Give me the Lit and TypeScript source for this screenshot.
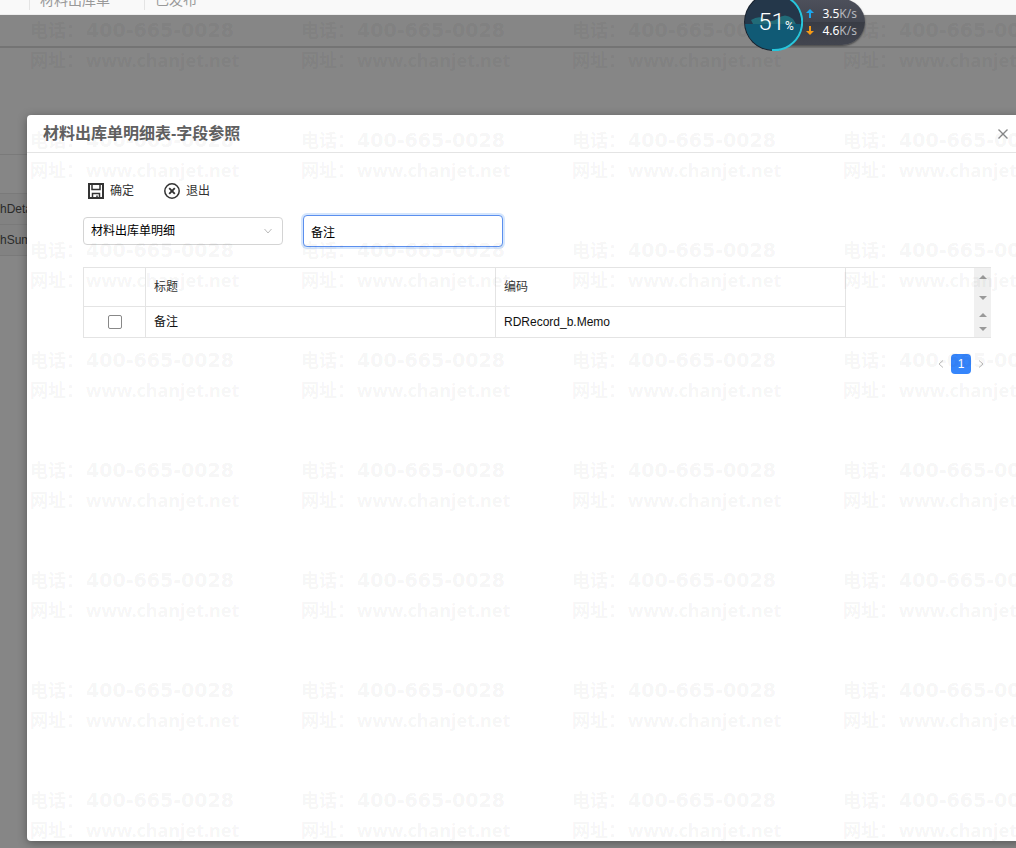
import { LitElement, html, css, svg } from "lit";
import { customElement, state } from "lit/decorators.js";

const caret = (up: boolean) => html`<svg class="caret" viewBox="0 0 8 4" aria-hidden="true">
  ${up ? svg`<path d="M0 4 4 0 8 4Z" />` : svg`<path d="M0 0H8L4 4Z" />`}
</svg>`;

@customElement("speed-ball")
class SpeedBall extends LitElement {
  static styles = css`
    :host {
      position: absolute;
      top: -8px;
      right: 151px;
      z-index: 4;
      display: flex;
      align-items: center;
      height: 60px;
      color: #fff;
      font-family: "Noto Sans", "Noto Sans CJK SC", sans-serif;
    }
    .ball {
      position: relative;
      z-index: 1;
      display: grid;
      place-items: center;
      width: 60px;
      height: 60px;
    }
    .ball svg {
      grid-area: 1 / 1;
      width: 60px;
      height: 60px;
    }
    .load {
      grid-area: 1 / 1;
      z-index: 1;
      display: flex;
      align-items: baseline;
      padding: 4px 0 0 6px;
      font-family: Roboto, sans-serif;
      font-weight: 300;
      font-size: 24px;
      line-height: 28px;
    }
    .load small {
      font-size: 12px;
      font-weight: 400;
    }
    .rates {
      box-sizing: border-box;
      width: 92px;
      height: 46px;
      margin-left: -30px;
      padding: 6px 8px 6px 33px;
      border-radius: 0 23px 23px 0;
      background: linear-gradient(#4d505b, #42454f 50%, #393c45 51%, #42454f);
      box-shadow: 0 1px 2px rgba(0, 0, 0, 0.5);
      font-size: 12px;
      line-height: 17px;
    }
    .rate {
      display: grid;
      grid-template-columns: 9px 1fr;
      align-items: center;
      height: 17px;
      white-space: nowrap;
      text-align: right;
    }
    .rate svg {
      width: 8px;
      height: 9px;
    }
    .unit {
      color: #b4b6bc;
    }
  `;

  render() {
    return html`
      <div class="ball">
        <svg viewBox="0 0 60 60" aria-hidden="true">
          <defs>
            <clipPath id="disc"><circle cx="30" cy="30" r="28" /></clipPath>
          </defs>
          <circle cx="30" cy="30" r="29" fill="#17212d" />
          <g clip-path="url(#disc)">
            <rect width="60" height="60" fill="#24374a" />
            <path d="M8 28Q16 23 22 27Q28 31 34 27Q42 20 50 27L53 32H10Z" fill="#216b78" />
            <rect y="32" width="60" height="28" fill="#105a75" />
          </g>
          <path d="M47 7A28 28 0 0 1 29 58" fill="none" stroke="#27c6dc" stroke-width="2" />
        </svg>
        <span class="load">51<small>%</small></span>
      </div>
      <div class="rates">
        <div class="rate">
          <svg viewBox="0 0 8 9" aria-hidden="true"><path d="M4 0 8 4H5V9H3V4H0Z" fill="#1ba7ee" /></svg>
          <span>3.5<span class="unit">K/s</span></span>
        </div>
        <div class="rate">
          <svg viewBox="0 0 8 9" aria-hidden="true"><path d="M4 9 8 5H5V0H3V5H0Z" fill="#f59a17" /></svg>
          <span>4.6<span class="unit">K/s</span></span>
        </div>
      </div>
    `;
  }
}

@customElement("contact-watermark")
class ContactWatermark extends LitElement {
  @state() private columns = 1;
  @state() private lines = 1;

  static styles = css`
    :host {
      position: absolute;
      inset: 0;
      z-index: 3;
      overflow: hidden;
      pointer-events: none;
      color: rgba(0, 0, 0, 0.05);
      font-family: "Noto Sans", "Noto Sans CJK SC", sans-serif;
      font-weight: 700;
      font-size: 18px;
      line-height: 30px;
    }
    .row {
      display: flex;
      height: 110px;
    }
    .tiles {
      padding: 15px 0 0 30px;
    }
    .tile {
      flex: none;
      width: 271px;
    }
    .line {
      display: grid;
      grid-template-columns: 56px 1fr;
      height: 30px;
      white-space: nowrap;
    }
    .phone {
      font-family: "DejaVu Sans", sans-serif;
      font-size: 19px;
    }
  `;

  private fill = () => {
    this.columns = Math.ceil((window.innerWidth - 30) / 271);
    this.lines = Math.ceil((window.innerHeight - 15) / 110);
  };

  connectedCallback() {
    super.connectedCallback();
    this.fill();
    window.addEventListener("resize", this.fill);
  }

  disconnectedCallback() {
    window.removeEventListener("resize", this.fill);
    super.disconnectedCallback();
  }

  render() {
    const tile = () => html`<div class="tile">
      <div class="line"><span>电话：</span><span class="phone">400-665-0028</span></div>
      <div class="line"><span>网址：</span><span>www.chanjet.net</span></div>
    </div>`;
    return html`<div class="tiles" aria-hidden="true">
      ${Array.from(
        { length: this.lines },
        () => html`<div class="row">${Array.from({ length: this.columns }, tile)}</div>`
      )}
    </div>`;
  }
}

@customElement("app-root")
class AppRoot extends LitElement {
  @state() private keyword = "备注";
  @state() private rows = [{ title: "备注", code: "RDRecord_b.Memo" }];

  static styles = css`
    :host {
      position: relative;
      display: flex;
      flex-direction: column;
      height: 100vh;
      overflow: hidden;
      background: #868686;
      color: #333;
      font-family: "Liberation Sans", "Noto Sans CJK SC", sans-serif;
      font-size: 12px;
      line-height: 18px;
    }
    button,
    input,
    select {
      margin: 0;
      font: inherit;
      color: inherit;
    }
    button {
      padding: 0;
      border: 0;
      background: none;
      cursor: pointer;
    }
    .topbar {
      display: flex;
      align-items: flex-end;
      flex: none;
      box-sizing: border-box;
      height: 15px;
      padding-left: 29px;
      overflow: hidden;
      background: #f9f9f9;
      border-bottom: 1px solid #ededed;
      color: #999;
      font-size: 14px;
      line-height: 20px;
    }
    .topbar span {
      box-sizing: border-box;
      height: 20px;
      margin-bottom: 4px;
      padding: 0 10px;
      border-left: 1px solid #e4e4e4;
    }
    .topbar .doc {
      width: 115px;
    }
    .under {
      flex: 1;
      color: #2a2a2a;
    }
    .rule {
      height: 31px;
      border-bottom: 2px solid #747474;
    }
    .gap {
      height: 106px;
      border-bottom: 1px solid #7a7a7a;
    }
    .head {
      height: 38px;
      border-bottom: 1px solid #7a7a7a;
    }
    .item {
      height: 30px;
      border-bottom: 1px solid #7a7a7a;
      background: #828282;
      line-height: 30px;
    }
    .dialog {
      position: absolute;
      inset: 115px -8px 7px 27px;
      z-index: 2;
      background: #fff;
      border-radius: 4px;
      box-shadow: 0 2px 10px rgba(0, 0, 0, 0.35);
    }
    .dialog-head {
      display: flex;
      align-items: center;
      justify-content: space-between;
      height: 37px;
      padding: 0 15px 0 16px;
      border-bottom: 1px solid #e4e4e4;
    }
    h2 {
      margin: 0;
      color: #606060;
      font-size: 16px;
      line-height: 24px;
    }
    .close {
      display: grid;
      width: 12px;
      height: 12px;
    }
    .close svg {
      width: 12px;
      height: 12px;
    }
    .body {
      padding: 28px 33px 0 56px;
    }
    .tools {
      display: flex;
      gap: 30px;
      padding-left: 5px;
    }
    .tool {
      display: flex;
      align-items: center;
      gap: 6px;
      height: 20px;
    }
    .tool svg {
      width: 16px;
      height: 16px;
    }
    .filters {
      display: flex;
      align-items: center;
      gap: 20px;
      margin-top: 14px;
      color: #000;
    }
    .picker {
      display: grid;
      align-items: center;
      width: 200px;
    }
    .picker select {
      grid-area: 1 / 1;
      appearance: none;
      box-sizing: border-box;
      width: 100%;
      height: 28px;
      padding: 0 24px 0 7px;
      border: 1px solid #d4d4d4;
      border-radius: 4px;
      background: #fff;
      outline: none;
    }
    .picker svg {
      grid-area: 1 / 1;
      justify-self: end;
      width: 8px;
      height: 6px;
      margin-right: 11px;
      pointer-events: none;
    }
    .keyword {
      box-sizing: border-box;
      width: 200px;
      height: 32px;
      padding: 0 7px;
      border: 1px solid #5b8fee;
      border-radius: 4px;
      box-shadow: 0 0 0 2px #d5e6fd;
      background: #fff;
      outline: none;
    }
    .grid {
      display: flex;
      justify-content: space-between;
      margin-top: 20px;
      border: solid #e4e4e4;
      border-width: 1px 0;
    }
    table {
      border-collapse: separate;
      border-spacing: 0;
      table-layout: fixed;
      width: 763px;
      border-left: 1px solid #e4e4e4;
    }
    th,
    td {
      box-sizing: border-box;
      padding: 0 8px;
      border-right: 1px solid #e4e4e4;
      font-weight: 400;
      text-align: left;
    }
    th {
      height: 39px;
      border-bottom: 1px solid #e4e4e4;
    }
    td {
      height: 30px;
      color: #111;
    }
    .pick {
      width: 62px;
      text-align: center;
    }
    .check {
      appearance: none;
      display: block;
      box-sizing: border-box;
      width: 14px;
      height: 14px;
      margin: 0 auto;
      border: 1px solid #888;
      border-radius: 2px;
      background: #fff;
    }
    .check:checked {
      background: #3585fb;
    }
    .bars {
      display: grid;
      grid-template-rows: 39px 30px;
      width: 17px;
      background: #f0f0f0;
    }
    .bar {
      display: flex;
      flex-direction: column;
      align-items: center;
      justify-content: space-between;
      box-sizing: border-box;
      padding: 7px 0;
    }
    .bar.short {
      padding: 6px 0;
    }
    .caret {
      width: 8px;
      height: 4px;
      fill: #999;
    }
    .pages {
      display: flex;
      justify-content: flex-end;
      align-items: center;
      gap: 7px;
      margin-top: 16px;
      padding-right: 7px;
    }
    .page {
      width: 20px;
      height: 20px;
      border-radius: 4px;
      background: #3585fb;
      color: #fff;
    }
    .step {
      display: grid;
    }
    .step svg {
      width: 6px;
      height: 8px;
    }
  `;

  private onKeyword(e: Event) {
    this.keyword = (e.target as HTMLInputElement).value;
  }

  render() {
    return html`
      <div class="topbar"><span class="doc">材料出库单</span><span>已发布</span></div>
      <div class="under">
        <div class="rule"></div>
        <div class="gap"></div>
        <div class="head"></div>
        <div class="item">hDeta</div>
        <div class="item">hSum</div>
      </div>

      <section class="dialog" role="dialog" aria-labelledby="title">
        <header class="dialog-head">
          <h2 id="title">材料出库单明细表-字段参照</h2>
          <button class="close" aria-label="关闭">
            <svg viewBox="0 0 12 12" fill="none" stroke="#888" stroke-width="1.4">
              <path d="M1.500 1.500 10.500 10.500M10.500 1.500 1.500 10.500" />
            </svg>
          </button>
        </header>
        <div class="body">
          <div class="tools">
            <button class="tool">
              <svg viewBox="0 0 16 16" fill="none" stroke="#333" stroke-width="2" aria-hidden="true">
                <path d="M1 1H15V15H1Z" />
                <path d="M4 1V6.500H12V1M4.500 15V10.500H11.500V15" stroke-width="1.500" />
                <path d="M9 12.500V14" stroke-width="1.500" />
              </svg>
              确定
            </button>
            <button class="tool">
              <svg viewBox="0 0 16 16" fill="none" stroke="#333" aria-hidden="true">
                <circle cx="8" cy="8" r="7.200" stroke-width="1.500" />
                <path d="M5.200 5.200 10.800 10.800M10.800 5.200 5.200 10.800" stroke-width="1.900" />
              </svg>
              退出
            </button>
          </div>
          <div class="filters">
            <div class="picker">
              <select aria-label="表">
                <option>材料出库单明细</option>
              </select>
              <svg viewBox="0 0 8 6" fill="none" stroke="#bbb" aria-hidden="true"><path d="M.5 1 4 5 7.500 1" /></svg>
            </div>
            <input class="keyword" type="text" aria-label="关键字" .value=${this.keyword} @input=${this.onKeyword} />
          </div>
          <div class="grid">
            <table>
              <thead>
                <tr>
                  <th class="pick"></th>
                  <th>标题</th>
                  <th>编码</th>
                </tr>
              </thead>
              <tbody>
                ${this.rows.map(
                  (r) => html`<tr>
                    <td class="pick"><input class="check" type="checkbox" aria-label=${r.title} /></td>
                    <td>${r.title}</td>
                    <td>${r.code}</td>
                  </tr>`
                )}
              </tbody>
            </table>
            <div class="bars">
              <div class="bar">${caret(true)}${caret(false)}</div>
              <div class="bar short">${caret(true)}${caret(false)}</div>
            </div>
          </div>
          <nav class="pages" aria-label="分页">
            <button class="step" aria-label="上一页">
              <svg viewBox="0 0 6 8" fill="none" stroke="#bbb"><path d="M5 .5 1 4 5 7.500" /></svg>
            </button>
            <button class="page">1</button>
            <button class="step" aria-label="下一页">
              <svg viewBox="0 0 6 8" fill="none" stroke="#bbb"><path d="M1 .5 5 4 1 7.500" /></svg>
            </button>
          </nav>
        </div>
      </section>

      <contact-watermark></contact-watermark>
      <speed-ball></speed-ball>
    `;
  }
}
